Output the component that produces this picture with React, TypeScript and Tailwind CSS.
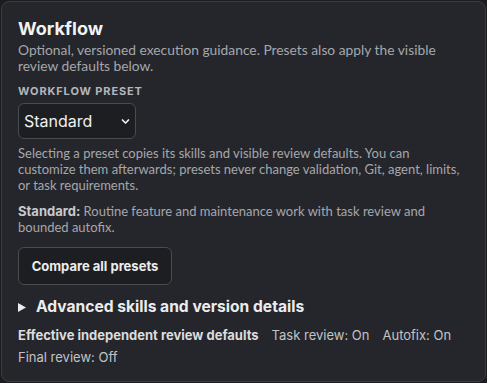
export default function App() {
  return (
    <div className="min-h-[383px] w-[487px] bg-[#1c1c1f] p-px font-['Lato',sans-serif] text-[13px] leading-4 text-[#a6a7ab]">
      <section className="h-[381px] w-[485px] rounded-lg border border-[#3b3c41] bg-[#25262b] px-4 pt-[15px]">
        <h2 className="font-['Inter',sans-serif] text-[18px] font-bold leading-6 text-[#f2f2f3]">Workflow</h2>
        <p className="pt-px text-[13.8px]">
          Optional, versioned execution guidance. Presets also apply the visible review defaults below.
        </p>

        <div className="mt-[9px] font-['Inter',sans-serif] text-[11px] font-bold uppercase leading-4 tracking-[0.08em] text-[#b5b6ba]">
          Workflow preset
        </div>
        <div className="mt-1 flex h-9 w-[118px] items-center justify-between rounded-md border border-[#4a4b51] bg-[#1d1e22] pr-[5px] pl-[5px] font-['Inter',sans-serif] text-[16px] text-[#f0f0f1]">
          <span>Standard</span>
          <svg width="9" height="9" viewBox="0 0 24 24" fill="none" stroke="#f0f0f1" strokeWidth="4.5" strokeLinecap="round" strokeLinejoin="round">
            <path d="m4 8 8 8 8-8" />
          </svg>
        </div>

        <p className="mt-1 pt-0.5">
          Selecting a preset copies its skills and visible review defaults. You can customize them afterwards; presets
          never change validation, Git, agent, limits, or task requirements.
        </p>
        <p className="mt-2.5">
          <strong className="inline-block font-['Inter',sans-serif] font-bold text-[#c9cacd]">Standard:</strong> Routine
          feature and maintenance work with task review and bounded autofix.
        </p>

        <button className="mt-3 h-[38px] w-[154px] rounded-md border border-[#4a4b51] bg-[#1d1e22] font-['Inter',sans-serif] text-[13px] font-bold text-[#ececed]">
          Compare all presets
        </button>

        <div className="mt-2.5 flex items-center gap-[10px] font-['Inter',sans-serif] text-[15.6px] font-bold leading-6 text-[#ececed]">
          <svg width="8" height="9" viewBox="0 0 8 9">
            <path d="M0 0 L8 4.5 L0 9 Z" fill="#ececed" />
          </svg>
          <span>Advanced skills and version details</span>
        </div>

        <div className="mt-2 flex flex-wrap gap-x-[13px] gap-y-1.5 font-['Inter',sans-serif] leading-4 text-[#c2c3c6]">
          <span className="font-bold text-[#dcdcde]">Effective independent review defaults</span>
          <span>Task review: On</span>
          <span>Autofix: On</span>
          <span>Final review: Off</span>
        </div>
      </section>
    </div>
  );
}
